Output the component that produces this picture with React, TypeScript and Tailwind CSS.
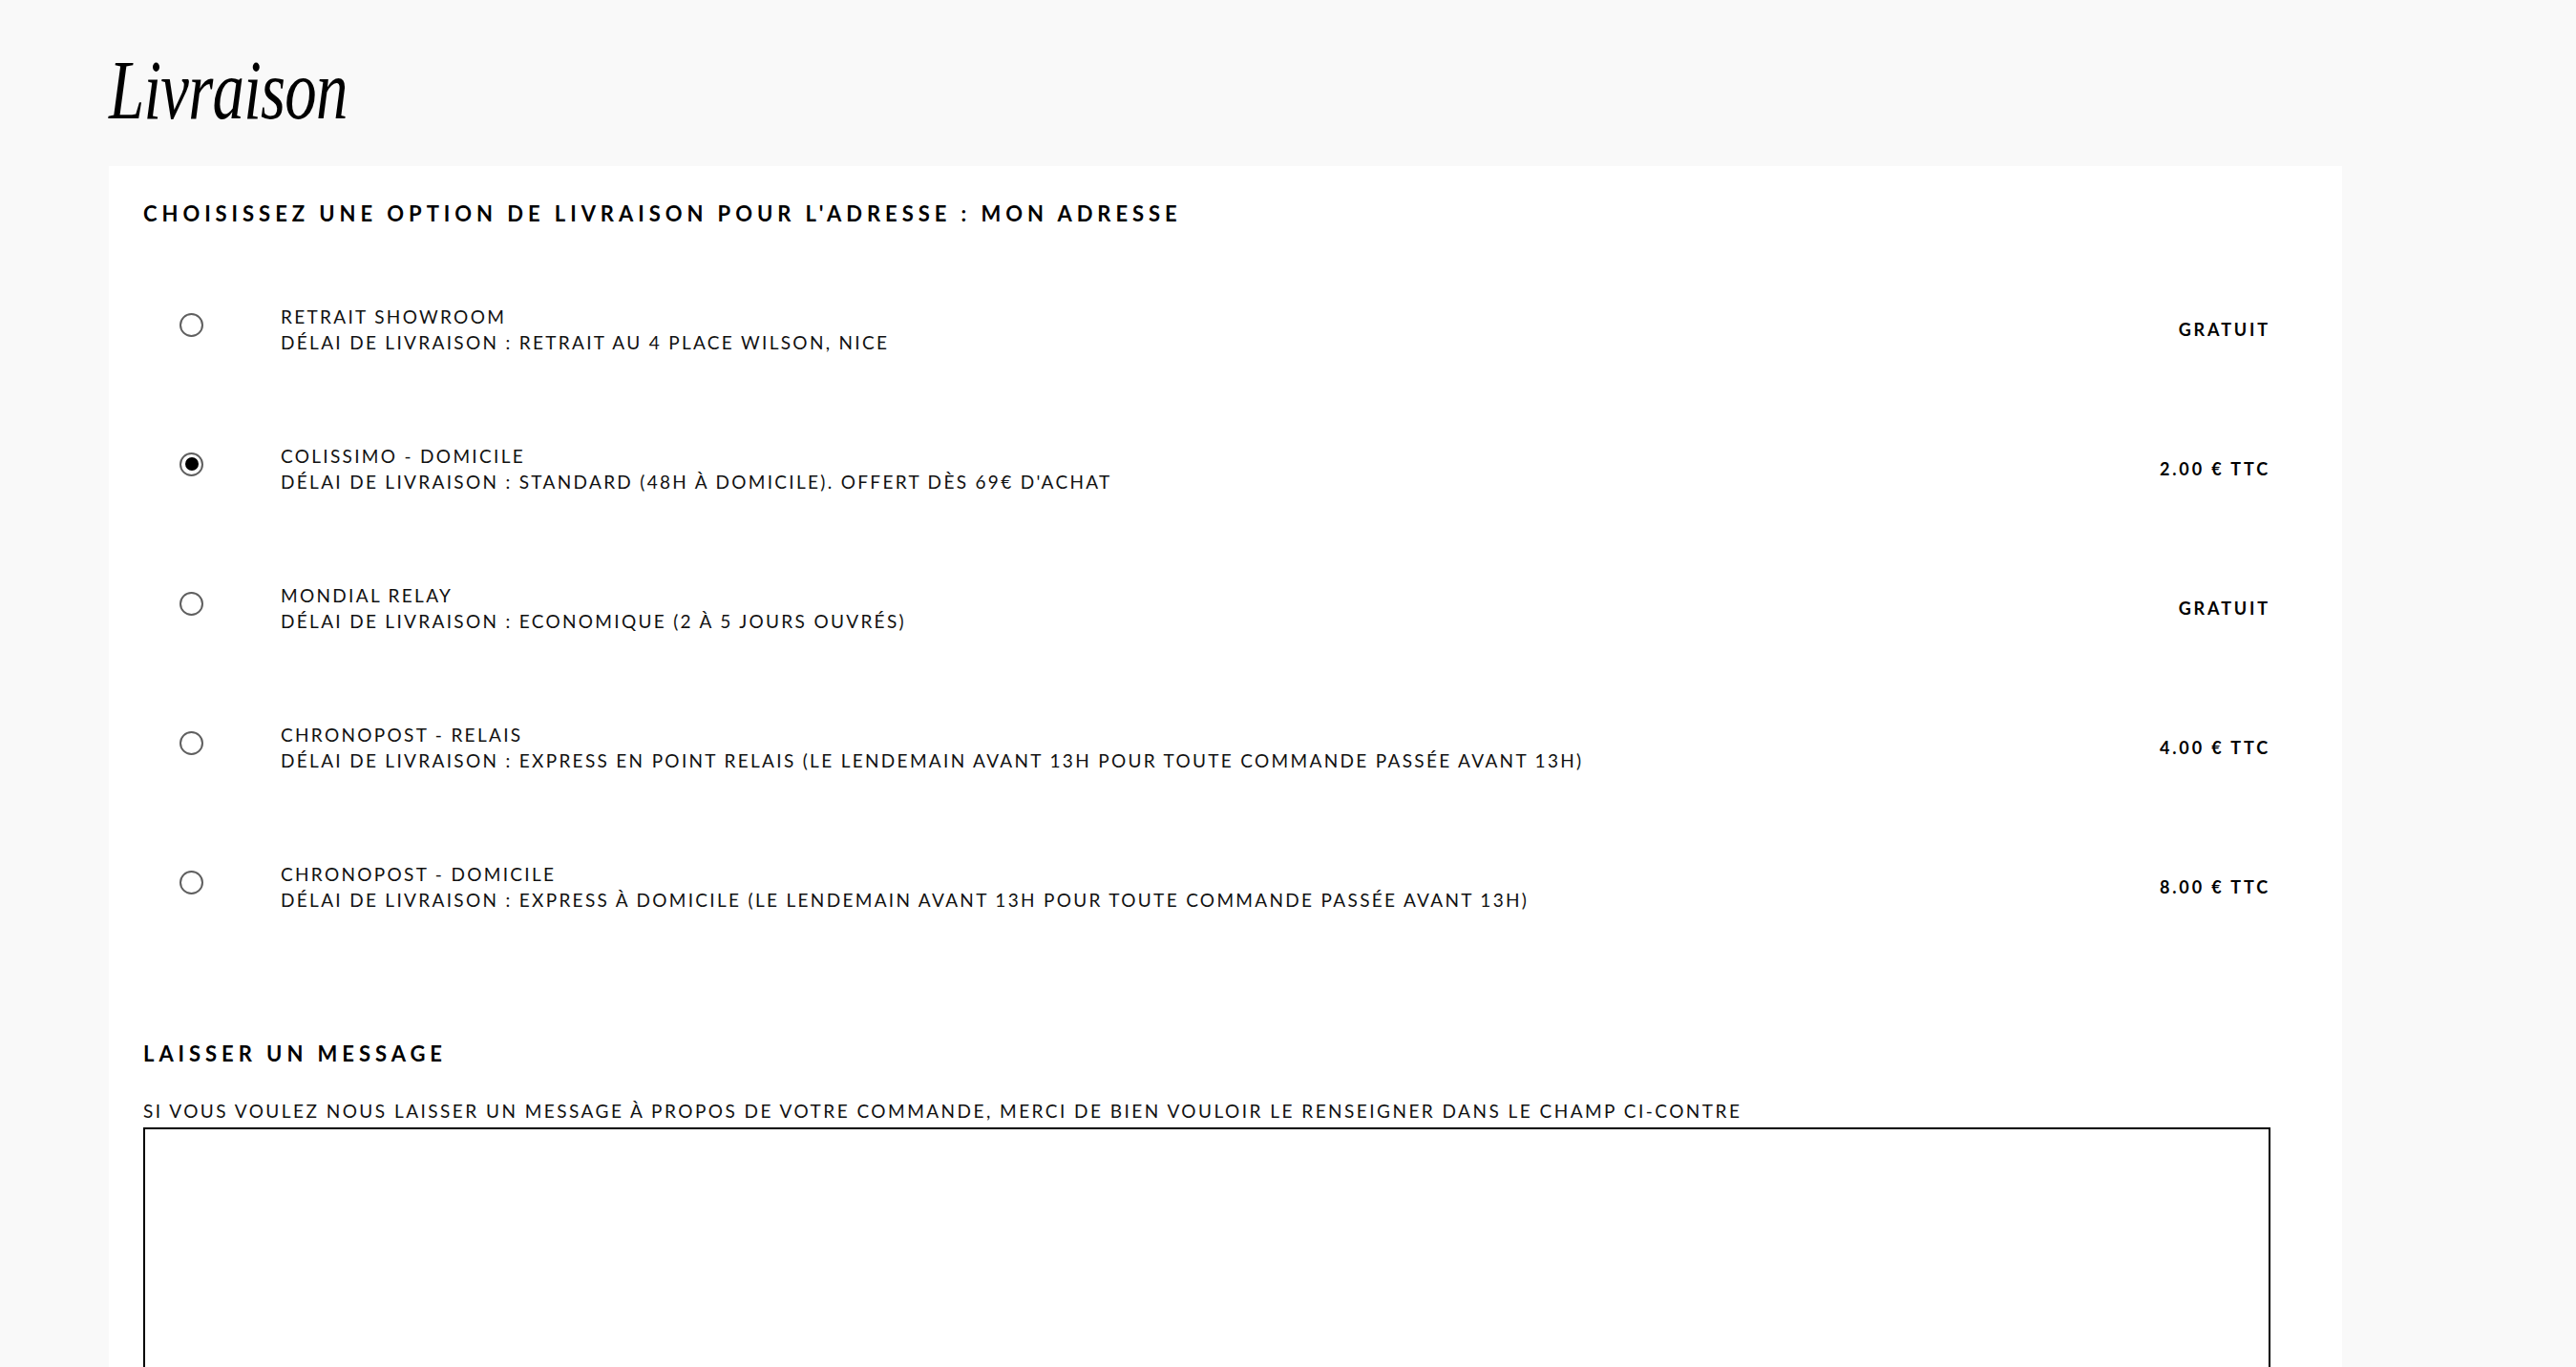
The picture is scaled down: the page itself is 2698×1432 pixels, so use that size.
import React from "react";

type Option = { title: string; desc: string; price: string; checked?: boolean };

const options: Option[] = [
  { title: "RETRAIT SHOWROOM", desc: "DÉLAI DE LIVRAISON : RETRAIT AU 4 PLACE WILSON, NICE", price: "GRATUIT" },
  { title: "COLISSIMO - DOMICILE", desc: "DÉLAI DE LIVRAISON : STANDARD (48H À DOMICILE). OFFERT DÈS 69€ D'ACHAT", price: "2.00 € TTC", checked: true },
  { title: "MONDIAL RELAY", desc: "DÉLAI DE LIVRAISON : ECONOMIQUE (2 À 5 JOURS OUVRÉS)", price: "GRATUIT" },
  { title: "CHRONOPOST - RELAIS", desc: "DÉLAI DE LIVRAISON : EXPRESS EN POINT RELAIS (LE LENDEMAIN AVANT 13H POUR TOUTE COMMANDE PASSÉE AVANT 13H)", price: "4.00 € TTC" },
  { title: "CHRONOPOST - DOMICILE", desc: "DÉLAI DE LIVRAISON : EXPRESS À DOMICILE (LE LENDEMAIN AVANT 13H POUR TOUTE COMMANDE PASSÉE AVANT 13H)", price: "8.00 € TTC" },
];

function Radio({ checked }: { checked?: boolean }) {
  return (
    <span className="flex h-[25px] w-[25px] items-center justify-center rounded-full border-2 border-[#5f5f5f] bg-white">
      {checked && <span className="block h-[14px] w-[14px] rounded-full bg-black" />}
    </span>
  );
}

export default function App() {
  return (
    <div className="min-h-screen bg-[#f9f9f9] pl-[114px] font-['Lato',_'Liberation_Sans',_sans-serif] text-[#111]">
      <h1 className="pt-[50px] h-[174px] font-['Liberation_Serif',_serif] text-[88px] italic font-normal leading-[90px] text-black">
        <span className="inline-block origin-left scale-x-[0.76] tracking-[-1px]">Livraison</span>
      </h1>
      <div className="w-[2339px] bg-white pl-[36px] pr-[75px] pt-[38px] pb-[40px]">
        <h2 className="text-[22px] font-bold leading-[24px] tracking-[0.225em] text-black">
          CHOISISSEZ UNE OPTION DE LIVRAISON POUR L'ADRESSE : MON ADRESSE
        </h2>
        <div className="mt-[36px] flex flex-col">
          {options.map((o) => (
            <div key={o.title} className="flex h-[146px] items-center">
              <div className="w-[144px] pl-[38px] mb-[10px]">
                <Radio checked={o.checked} />
              </div>
              <div className="flex-1 text-[19px] leading-[27px] tracking-[0.122em] text-[#111]">
                <div>{o.title}</div>
                <div>{o.desc}</div>
              </div>
              <div className="text-[18px] font-bold tracking-[0.16em] text-black">{o.price}</div>
            </div>
          ))}
        </div>
        <h2 className="mt-[90px] text-[22px] font-bold leading-[24px] tracking-[0.225em] text-black">
          LAISSER UN MESSAGE
        </h2>
        <p className="mt-[34px] text-[19px] leading-[28px] tracking-[0.13em] text-[#111]">
          SI VOUS VOULEZ NOUS LAISSER UN MESSAGE À PROPOS DE VOTRE COMMANDE, MERCI DE BIEN VOULOIR LE RENSEIGNER DANS LE CHAMP CI-CONTRE
        </p>
        <textarea className="mt-[3px] block h-[320px] w-full resize-none border-2 border-black bg-white outline-none" />
      </div>
    </div>
  );
}
